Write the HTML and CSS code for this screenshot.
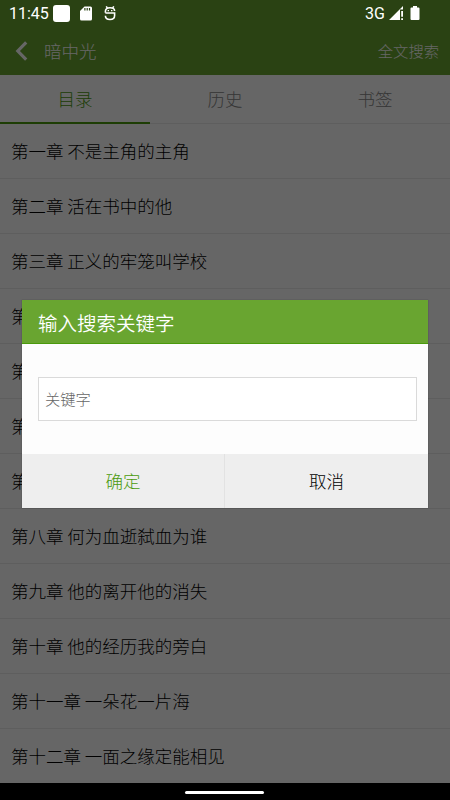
FILE: index.html
```html
<!DOCTYPE html>
<html lang="zh-CN">
  <head>
    <meta charset="UTF-8" />
    <meta name="viewport" content="width=device-width, initial-scale=1.0" />
    <title>暗中光</title>
    <link rel="stylesheet" href="styles.css">
  </head>

  <body>
    <div class="page">
      <div class="header">
        <svg class="back" width="14" height="22" viewBox="0 0 14 22"><path d="M11.2 2.4 L2.8 11 L11.2 19.6" /></svg>
        <h1>暗中光</h1>
        <span class="search">全文搜索</span>
      </div>

      <div class="tabs">
        <span class="on">目录</span>
        <span>历史</span>
        <span>书签</span>
      </div>

      <ul class="chapters">
        <li>第一章 不是主角的主角</li>
        <li>第二章 活在书中的他</li>
        <li>第三章 正义的牢笼叫学校</li>
        <li>第</li>
        <li>第</li>
        <li>第</li>
        <li>第</li>
        <li>第八章 何为血逝弑血为谁</li>
        <li>第九章 他的离开他的消失</li>
        <li>第十章 他的经历我的旁白</li>
        <li>第十一章 一朵花一片海</li>
        <li>第十二章 一面之缘定能相见</li>
      </ul>
    </div>

    <div class="mask">
      <div class="dialog">
        <h2>输入搜索关键字</h2>
        <div class="content">
          <input type="text" placeholder="关键字" />
        </div>
        <div class="btns">
          <button class="ok">确定</button>
          <button>取消</button>
        </div>
      </div>
    </div>

    <div class="status">
      <span class="time">11:45</span>
      <i class="block"></i>
      <svg class="sd" width="12" height="15" viewBox="0 0 12 15">
        <path fill="#fff" d="M4.5 0.5 H10.5 Q12 0.5 12 2 V13 Q12 14.5 10.5 14.5 H1.5 Q0 14.5 0 13 V5 Z" />
        <path stroke="#2a4213" stroke-width="1.2" d="M4.9 2 V4.6 M7.2 2 V4.6 M9.5 2 V4.6" />
      </svg>
      <svg class="debug" width="12" height="15" viewBox="0 0 12 15">
        <path fill="none" stroke="#fff" stroke-width="1.6" d="M1.4 6.8 V5.5 Q1.4 1.8 6 1.8 Q10.6 1.8 10.6 5 M1.4 7 H10.6 V9.5 Q10.6 13.5 6 13.5 Q1.4 13.5 1.4 9.8 M2.2 0.4 L3.6 2.4 M9.8 0.4 L8.4 2.4" />
        <path fill="#fff" d="M3.6 4 H5 V5.2 H3.6 Z M7 4 H8.4 V5.2 H7 Z" />
      </svg>
      <span class="net">3G</span>
      <svg class="signal" width="15" height="15" viewBox="0 0 15 15">
        <path fill="#fff" d="M0 14 L14 0 V3.6 H11 V14 Z" />
        <path fill="#fff" d="M12.2 5 H14 V10.8 H12.2 Z M12.2 12.2 H14 V14 H12.2 Z" />
      </svg>
      <svg class="battery" width="10" height="15" viewBox="0 0 10 15">
        <path fill="#fff" d="M3 0 H7 V1.4 H8.5 Q9.5 1.4 9.5 2.4 V13 Q9.5 14 8.5 14 H1.5 Q0.5 14 0.5 13 V2.4 Q0.5 1.4 1.5 1.4 H3 Z" />
      </svg>
    </div>

    <div class="navbar"><i></i></div>
  </body>
</html>
```
FILE: styles.css
```css
* {
  margin: 0;
  padding: 0;
  box-sizing: border-box;
}

body {
  position: relative;
  width: 450px;
  height: 800px;
  overflow: hidden;
  font-family: "Noto Sans CJK SC", sans-serif;
  font-weight: 300;
  font-size: 17.5px;
  background-color: #fff;
}

.page {
  height: 783px;
  overflow: hidden;
}

.header {
  display: flex;
  align-items: center;
  height: 75px;
  padding: 26px 11px 0 15px;
  background-color: #69a530;
  color: #fff;
}

.header .back {
  fill: none;
  stroke: #fff;
  stroke-width: 3.2;
}

.header h1 {
  flex: 1;
  margin-left: 15px;
  padding-bottom: 1px;
  font-size: 17.5px;
  font-weight: 300;
}

.header .search {
  padding-bottom: 2px;
  font-size: 15.3px;
}

.tabs {
  display: flex;
  height: 49px;
  border-bottom: 1px solid #eaeaea;
}

.tabs span {
  flex: 1;
  height: 49px;
  line-height: 47px;
  text-align: center;
  color: #888;
}

.tabs .on {
  border-bottom: 2px solid #4a9a0c;
  color: #4a9a0c;
}

.chapters {
  list-style-type: none;
}

.chapters li {
  height: 55px;
  padding-left: 11px;
  border-bottom: 1px solid #eaeaea;
  line-height: 53px;
  color: #000;
}

/* 遮罩层 */
.mask {
  position: absolute;
  top: 0;
  left: 0;
  width: 450px;
  height: 783px;
  padding: 300px 22px 0;
  background-color: rgba(0, 0, 0, 0.6);
}

.dialog {
  width: 406px;
  background-color: #fdfdfd;
  box-shadow: 0 0 1px rgba(0, 0, 0, 0.4);
}

.dialog h2 {
  height: 44px;
  padding-left: 16px;
  border-bottom: 1px solid #4a9a0c;
  background-color: #69a530;
  line-height: 45px;
  font-size: 19.5px;
  font-weight: 350;
  color: #fff;
}

.dialog .content {
  padding: 33px 11px 33px 16px;
}

.dialog input {
  display: block;
  width: 379px;
  height: 44px;
  padding: 0 6px 2px;
  border: 1px solid #dadada;
  background-color: #fff;
  font: inherit;
  font-size: 15.3px;
}

.dialog input::placeholder {
  color: #666;
}

.btns {
  display: flex;
}

.btns button {
  flex: 1;
  height: 54px;
  padding-bottom: 2px;
  border: 0;
  background-color: #eee;
  font: inherit;
  color: #000;
}

.btns .ok {
  flex: 0 0 203px;
  border-right: 1px solid #e2e2e2;
  color: #4a9a0c;
}

/* 状态栏 */
.status {
  position: absolute;
  top: 0;
  left: 0;
  display: flex;
  align-items: center;
  width: 450px;
  height: 27px;
  padding: 0 30px 0 9px;
  font-family: Roboto, sans-serif;
  font-weight: 400;
  font-size: 16px;
  color: #fff;
}

.status .block {
  width: 17px;
  height: 17px;
  margin-left: 4px;
  border-radius: 3px;
  background-color: #fff;
}

.status .sd {
  margin-left: 10px;
}

.status .debug {
  margin-left: 12px;
}

.status .net {
  margin-left: auto;
}

.status .signal {
  margin-left: 4px;
}

.status .battery {
  margin-left: 6px;
}

.navbar {
  position: absolute;
  left: 0;
  bottom: 0;
  display: flex;
  justify-content: center;
  width: 450px;
  height: 17px;
  padding: 8px 1px 0 0;
  background-color: #000;
}

.navbar i {
  width: 79px;
  height: 3px;
  border-radius: 2px;
  background-color: #fff;
}
```
